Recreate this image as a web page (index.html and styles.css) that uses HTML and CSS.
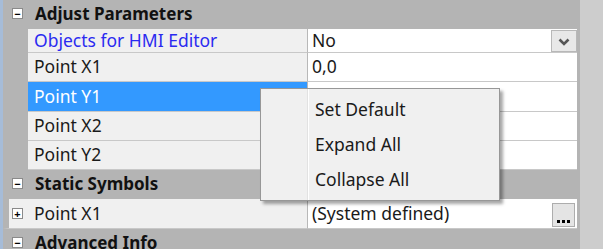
FILE: index.html
```html
<!DOCTYPE html>
<html lang="en">
<head>
    <meta charset="UTF-8">
    <title>Properties</title>
    <link rel="stylesheet" href="styles.css">
</head>
<body>
    <div class="window">
        <div class="grid">
            <div class="cat h29">
                <span class="box">&minus;</span>
                <span class="cat-text">Adjust Parameters</span>
            </div>
            <div class="prop h24">
                <div class="gutter"></div>
                <div class="name link">Objects for HMI Editor</div>
                <div class="value">
                    <span>No</span>
                    <span class="dropbtn">
                        <svg width="12" height="8" viewBox="0 0 12 8"><path d="M1.5 1.5 L6 6 L10.5 1.5" fill="none" stroke="#555" stroke-width="2.6"/></svg>
                    </span>
                </div>
            </div>
            <div class="prop h29">
                <div class="gutter"></div>
                <div class="name">Point X1</div>
                <div class="value">0,0</div>
            </div>
            <div class="prop h30 selected">
                <div class="gutter"></div>
                <div class="name">Point Y1</div>
                <div class="value"></div>
            </div>
            <div class="prop h29">
                <div class="gutter"></div>
                <div class="name">Point X2</div>
                <div class="value"></div>
            </div>
            <div class="prop h29">
                <div class="gutter"></div>
                <div class="name">Point Y2</div>
                <div class="value"></div>
            </div>
            <div class="cat h29">
                <span class="box">&minus;</span>
                <span class="cat-text">Static Symbols</span>
            </div>
            <div class="prop h30 expandable">
                <div class="gutter"><span class="box plus">+</span></div>
                <div class="name">Point X1</div>
                <div class="value">
                    <span>(System defined)</span>
                    <span class="dotbtn"><i></i><i></i><i></i></span>
                </div>
            </div>
            <div class="cat h29">
                <span class="box">&minus;</span>
                <span class="cat-text">Advanced Info</span>
            </div>
        </div>
        <div class="scroll"></div>
    </div>

    <div class="menu">
        <div class="menu-item">Set Default</div>
        <div class="menu-item">Expand All</div>
        <div class="menu-item">Collapse All</div>
    </div>
</body>
</html>
```

FILE: styles.css
```css
body {
    margin: 0;
    padding: 0;
    background-color: white;
    font-family: "Noto Sans", "Open Sans", sans-serif;
    font-size: 17.5px;
    color: #1a1a1a;
    overflow: hidden;
}

.window {
    display: flex;
    height: 249px;
    width: 603px;
    border-left: 3px solid #a6bcd8;
    box-sizing: border-box;
    overflow: hidden;
}

.grid {
    width: 577px;
    background-color: #b4b4b4;
    padding-right: 3px;
}

.scroll {
    width: 23px;
    background-color: #cdcdcd;
}

.h24 { height: 24px; }
.h29 { height: 29px; }
.h30 { height: 30px; }

.cat {
    display: flex;
    align-items: center;
    box-sizing: border-box;
    background-color: #b4b4b4;
    padding-bottom: 2px;
}

.cat .box {
    margin-left: 9px;
}

.cat-text {
    margin-left: 12px;
    font-weight: bold;
    font-size: 17px;
    color: #111;
}

.box {
    width: 9px;
    height: 9px;
    border: 1px solid #8a8a8a;
    background-color: white;
    font-size: 11px;
    line-height: 9px;
    text-align: center;
    font-weight: bold;
    color: black;
    display: inline-block;
}

.prop {
    display: flex;
    box-sizing: border-box;
}

.gutter {
    width: 25px;
    background-color: #b4b4b4;
}

.name {
    width: 280px;
    background-color: #f0f0f0;
    border-right: 1px solid #b8b8b8;
    border-bottom: 1px solid #c8c8c8;
    padding-left: 6px;
    padding-bottom: 2px;
    box-sizing: border-box;
    display: flex;
    align-items: center;
}

.value {
    flex: 1;
    background-color: white;
    border-bottom: 1px solid #c8c8c8;
    padding-left: 4px;
    padding-bottom: 2px;
    display: flex;
    align-items: center;
    justify-content: space-between;
}

.link {
    color: #2b2bf0;
}

.selected .name {
    background-color: #3399ff;
    color: white;
}

.expandable .gutter {
    display: flex;
    align-items: center;
    background-color: #f0f0f0;
    border-left: 6px solid #b4b4b4;
    border-bottom: 1px solid #c8c8c8;
    box-sizing: border-box;
    width: 25px;
}

.expandable .gutter .box {
    margin-left: 3px;
}

.dropbtn {
    width: 26px;
    height: 22px;
    border: 1px solid #b8b8b8;
    background-color: #e8e8e8;
    display: flex;
    align-items: center;
    justify-content: center;
    box-sizing: border-box;
    margin-top: 2px;
    padding-top: 3px;
}

.dotbtn {
    width: 23px;
    height: 24px;
    border: 1px solid #adadad;
    background-color: #e4e4e4;
    box-sizing: border-box;
    display: flex;
    align-items: flex-end;
    justify-content: center;
    gap: 2px;
    padding-bottom: 3px;
    margin-right: 2px;
    margin-top: 4px;
}

.dotbtn i {
    width: 3px;
    height: 3px;
    background-color: black;
}

.menu {
    position: absolute;
    left: 260px;
    top: 88px;
    width: 240px;
    box-sizing: border-box;
    padding: 3px 2px;
    background-color: #f0f0f0;
    border: 1px solid #979797;
    box-shadow: 3px 3px 3px rgba(0, 0, 0, 0.35);
    background-image: linear-gradient(to right, transparent 46px, #e2e2e2 46px, #e2e2e2 47px, white 47px, white 48px, transparent 48px);
}

.menu-item {
    height: 35px;
    display: flex;
    align-items: center;
    padding-left: 52px;
    padding-bottom: 2px;
    box-sizing: border-box;
    color: #1a1a1a;
}
```
